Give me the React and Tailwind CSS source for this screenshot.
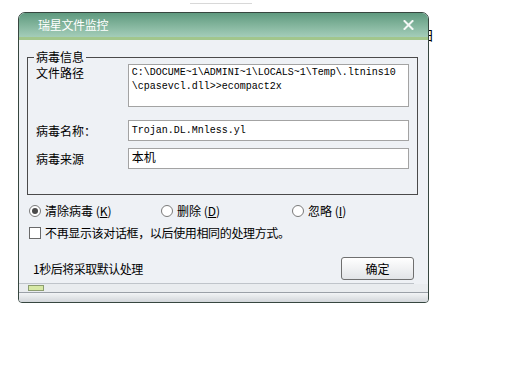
export default function App() {
  const cjk = { fontFamily: '"Noto Sans CJK SC", "Noto Sans", sans-serif' };
  const mono = { fontFamily: '"Liberation Mono", "Noto Sans CJK SC", monospace' };
  return (
    <div className="relative w-[512px] h-[384px] bg-white overflow-hidden" style={cjk}>
      <div className="absolute left-[190px] top-[3px] w-[62px] h-[1px] bg-[#d8d8d8]" />
      <div className="absolute left-[421px] top-[28px] text-[13px] leading-[14px] text-black">日</div>
      <div className="relative ml-[18px] mt-[12px] w-[411px] h-[291px] border border-[#36463f] rounded-t-[7px] rounded-b-[4px] bg-[#eef1f5] overflow-hidden flex flex-col">
        <div className="h-[24px] shrink-0 bg-gradient-to-b from-[#5f9a7f] via-[#82b49c] to-[#a4cdb9] flex items-center justify-between pl-[19px] pr-[14px]">
          <span className="text-white text-[12px] leading-none tracking-[-0.3px]">瑞星文件监控</span>
          <svg width="11" height="10" viewBox="0 0 11 10"><path d="M1.5 1 L9.5 9 M9.5 1 L1.5 9" stroke="#f4f8f6" strokeWidth="2" strokeLinecap="square" /></svg>
        </div>
        <div className="h-[3px] shrink-0 bg-[#a2c68c]" />
        <div className="flex-1 flex flex-col">
          <div className="relative mt-[17px] ml-[8px] w-[391px] h-[138px] border border-[#4a4a4a] px-[8px]">
            <span className="absolute left-[6px] top-[-9px] bg-[#eef1f5] px-[2px] text-[12px] leading-[16px] text-black">病毒信息</span>
            <div className="flex mt-[6px]">
              <div className="w-[92px] text-[12px] leading-[16px] pt-[1px] text-black">文件路径</div>
              <div className="w-[282px] h-[43px] bg-white border border-[#a3a3a3] px-[3px] pt-[1px] text-[10px] leading-[14px] text-black" style={mono}>
                <div>C:\DOCUME~1\ADMINI~1\LOCALS~1\Temp\.ltnins10</div>
                <div>\cpasevcl.dll&gt;&gt;ecompact2x</div>
              </div>
            </div>
            <div className="flex items-center mt-[13px]">
              <div className="w-[92px] text-[12px] leading-[16px] text-black">病毒名称：</div>
              <div className="w-[282px] h-[21px] bg-white border border-[#a3a3a3] px-[3px] flex items-center text-[10px] text-black" style={mono}>Trojan.DL.Mnless.yl</div>
            </div>
            <div className="flex items-center mt-[7px]">
              <div className="w-[92px] text-[12px] leading-[16px] text-black">病毒来源</div>
              <div className="w-[282px] h-[21px] bg-white border border-[#a3a3a3] px-[3px] flex items-start text-[12px] leading-[16px] text-black">本机</div>
            </div>
          </div>
          <div className="flex items-center mt-[9px] ml-[10px] h-[14px] text-[12px] leading-none text-black">
            <div className="flex items-center w-[132px]">
              <span className="w-[12px] h-[12px] rounded-full border border-[#7a7a7a] bg-white flex items-center justify-center">
                <span className="w-[6px] h-[6px] rounded-full bg-[#4a4a4a]" />
              </span>
              <span className="ml-[4px]">清除病毒 (<u>K</u>)</span>
            </div>
            <div className="flex items-center w-[131px]">
              <span className="w-[12px] h-[12px] rounded-full border border-[#7a7a7a] bg-white" />
              <span className="ml-[4px]">删除 (<u>D</u>)</span>
            </div>
            <div className="flex items-center">
              <span className="w-[12px] h-[12px] rounded-full border border-[#7a7a7a] bg-white" />
              <span className="ml-[4px]">忽略 (<u>I</u>)</span>
            </div>
          </div>
          <div className="flex items-center mt-[8px] ml-[10px] h-[14px] text-[12px] leading-none text-black">
            <span className="w-[12px] h-[12px] border border-[#6a6a6a] bg-white" />
            <span className="ml-[4px] tracking-[-0.35px]">不再显示该对话框，以后使用相同的处理方式。</span>
          </div>
          <div className="flex items-center justify-between mt-[17px] ml-[14px] mr-[14px] h-[23px]">
            <span className="text-[12px] leading-none text-black tracking-[-0.5px]">1秒后将采取默认处理</span>
            <button className="w-[73px] h-[23px] border border-[#6f6f6f] rounded-[3px] bg-gradient-to-b from-[#ffffff] to-[#e2e4e7] text-[12px] leading-none text-black">确定</button>
          </div>
          <div className="mt-[3px] h-[1px] w-[395px] bg-[#bfc4ca]" />
          <div className="h-[8px] flex items-center bg-[#e9ecef] pl-[9px]">
            <span className="w-[16px] h-[6px] border border-[#8c9d70] bg-[#d7e9a6]" />
          </div>
          <div className="h-[1px] bg-[#9aa0a7]" />
          <div className="flex-1 bg-gradient-to-b from-[#f2f4f6] to-[#d2d6da]" />
        </div>
      </div>
    </div>
  );
}
